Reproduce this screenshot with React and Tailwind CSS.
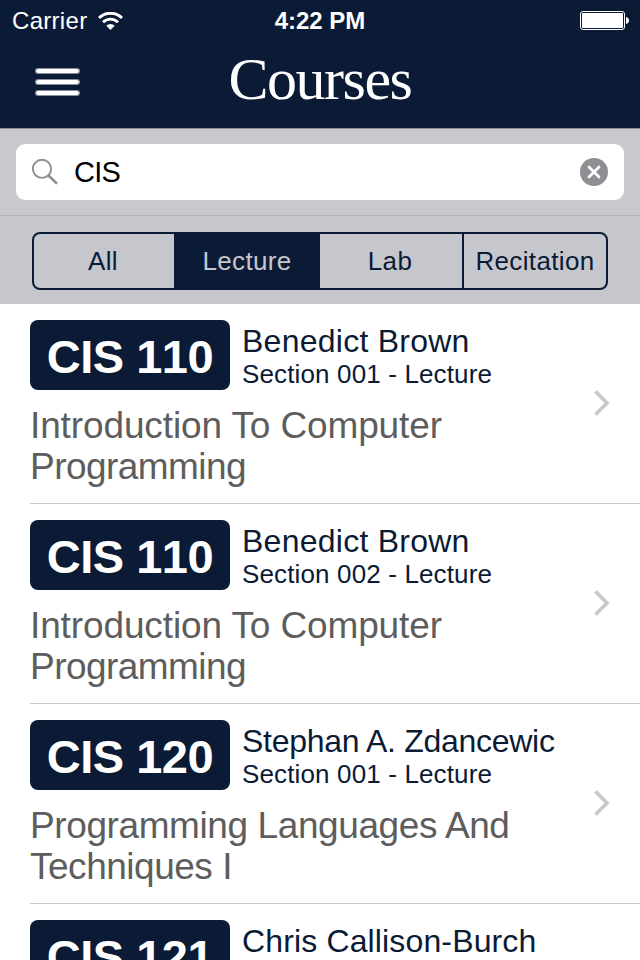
const courses = [
  {
    code: "CIS 110",
    teacher: "Benedict Brown",
    nameClass: "tracking-[0.25px]",
    section: "Section 001 - Lecture",
    lines: [
      { text: "Introduction To Computer", className: "tracking-[-0.12px]" },
      { text: "Programming", className: "tracking-[-0.55px]" },
    ],
  },
  {
    code: "CIS 110",
    teacher: "Benedict Brown",
    nameClass: "tracking-[0.25px]",
    section: "Section 002 - Lecture",
    lines: [
      { text: "Introduction To Computer", className: "tracking-[-0.12px]" },
      { text: "Programming", className: "tracking-[-0.55px]" },
    ],
  },
  {
    code: "CIS 120",
    teacher: "Stephan A. Zdancewic",
    nameClass: "tracking-[-0.29px]",
    section: "Section 001 - Lecture",
    lines: [
      { text: "Programming Languages And", className: "tracking-[-0.4px]" },
      { text: "Techniques I", className: "tracking-[-0.48px]" },
    ],
  },
  {
    code: "CIS 121",
    teacher: "Chris Callison-Burch",
    nameClass: "tracking-[0.14px]",
    section: "Section 001 - Lecture",
    lines: [],
  },
];

function StatusBar() {
  return (
    <div className="grid h-10 grid-cols-3 items-center text-[24px] leading-[41px] text-white">
      <div className="flex items-center pl-3">
        <span className="w-[75px] tracking-[0.3px]">Carrier</span>
        <svg className="ml-[11px]" width="25" height="18" viewBox="0 0 25 18" fill="none" stroke="white" strokeWidth="2.9">
          <path d="M1 6A16.300 16.300 0 0 1 24 6" />
          <path d="M5 10.200A10.600 10.600 0 0 1 20 10.200" />
          <path d="M12.500 18l-4.200-4.300a6 6 0 0 1 8.400 0z" fill="white" stroke="none" />
        </svg>
      </div>
      <div className="text-center font-bold whitespace-nowrap">4:22 PM</div>
      <div className="flex justify-end pr-[11px]">
        <svg width="49" height="19" viewBox="0 0 49 19">
          <rect x="0.5" y="0.5" width="44" height="18" rx="2.5" fill="none" stroke="white" />
          <rect x="2" y="2" width="41" height="15" rx="1" fill="white" />
          <path d="M46 6c2 .3 3 1.600 3 3.500s-1 3.200-3 3.500z" fill="white" />
        </svg>
      </div>
    </div>
  );
}

function MenuBar() {
  return <span className="h-[6px] w-[45px] rounded-full border border-white/50 bg-white bg-clip-padding" />;
}

function NavBar() {
  return (
    <div className="grid h-[88px] grid-cols-[120px_1fr_120px] text-white">
      <div className="flex flex-col gap-[5px] pt-[28px] pl-[35px]">
        <MenuBar />
        <MenuBar />
        <MenuBar />
      </div>
      <h1 className="text-center font-['Liberation_Serif',serif] text-[60px] leading-[79px] tracking-[-1.5px]">Courses</h1>
    </div>
  );
}

function SearchBar() {
  return (
    <div className="h-[88px] border-t border-b border-t-[#8c8d94] border-b-[#b4b4b9] bg-[#c9c8ce] px-4 pt-[15px]">
      <div className="flex h-14 items-center rounded-[9px] bg-white px-4">
        <svg width="27" height="28" viewBox="0 0 27 28" fill="none" stroke="#8e8e93">
          <circle cx="10" cy="10.800" r="9.100" strokeWidth="1.900" />
          <path d="M16.500 17.500L25 25.700" strokeWidth="2.600" />
        </svg>
        <span className="ml-[15px] grow text-[29px] leading-[55px] tracking-[-0.8px] text-black">CIS</span>
        <svg width="28" height="28" viewBox="0 0 28 28">
          <circle cx="14" cy="14" r="14" fill="#8e8e93" />
          <path d="M9 9l10 10M19 9L9 19" stroke="white" strokeWidth="2.700" strokeLinecap="round" />
        </svg>
      </div>
    </div>
  );
}

function Scope() {
  return (
    <div className="h-[88px] bg-[#c6c7cd] px-8 pt-4">
      <div className="flex h-[58px] overflow-hidden rounded-[8px] border-2 border-[#0b1b35] text-center text-[26px] leading-[54px] tracking-[0.35px] text-[#0b1b35]">
        <div className="w-[140px] pr-[2px]">All</div>
        <div className="w-[146px] bg-[#0b1b35] text-[#c6c7cd]">Lecture</div>
        <div className="w-[142px] pr-[2px]">Lab</div>
        <div className="w-[144px] border-l-2 border-[#0b1b35] whitespace-nowrap">Recitation</div>
      </div>
    </div>
  );
}

function CourseRow({ course }) {
  return (
    <li className="pl-[30px]">
      <div className="flex h-[200px] justify-between border-b border-[#c8c7cc] pt-4">
        <div>
          <div className="flex">
            <div className="h-[70px] w-[200px] rounded-[8px] bg-[#0b1b35] text-center text-[47px] leading-[74px] font-bold tracking-[-0.5px] whitespace-nowrap text-white [font-kerning:none]">
              {course.code}
            </div>
            <div className="pt-[2px] pl-3 whitespace-nowrap text-[#0b1b35]">
              <div className={`text-[32px] leading-[38px] ${course.nameClass}`}>{course.teacher}</div>
              <div className="text-[26px] leading-[28px] tracking-[0.14px]">{course.section}</div>
            </div>
          </div>
          <div className="pt-[15px] text-[37px] leading-[41px] whitespace-nowrap text-[#5d5d5d]">
            {course.lines.map((line) => (
              <div key={line.text} className={line.className}>{line.text}</div>
            ))}
          </div>
        </div>
        <svg className="mt-[70px] mr-[30px] shrink-0" width="16" height="26" viewBox="0 0 16 26" fill="none" stroke="#c7c7cc" strokeWidth="3.600">
          <path d="M1.500 1.500L13 13L1.500 24.500" />
        </svg>
      </div>
    </li>
  );
}

export default function App() {
  return (
    <div className="h-[960px] w-[640px] overflow-hidden bg-white font-['Liberation_Sans',Arial,sans-serif]">
      <header className="bg-[#0b1b35]">
        <StatusBar />
        <NavBar />
      </header>
      <SearchBar />
      <Scope />
      <ul>
        {courses.map((course, i) => (
          <CourseRow key={i} course={course} />
        ))}
      </ul>
    </div>
  );
}
